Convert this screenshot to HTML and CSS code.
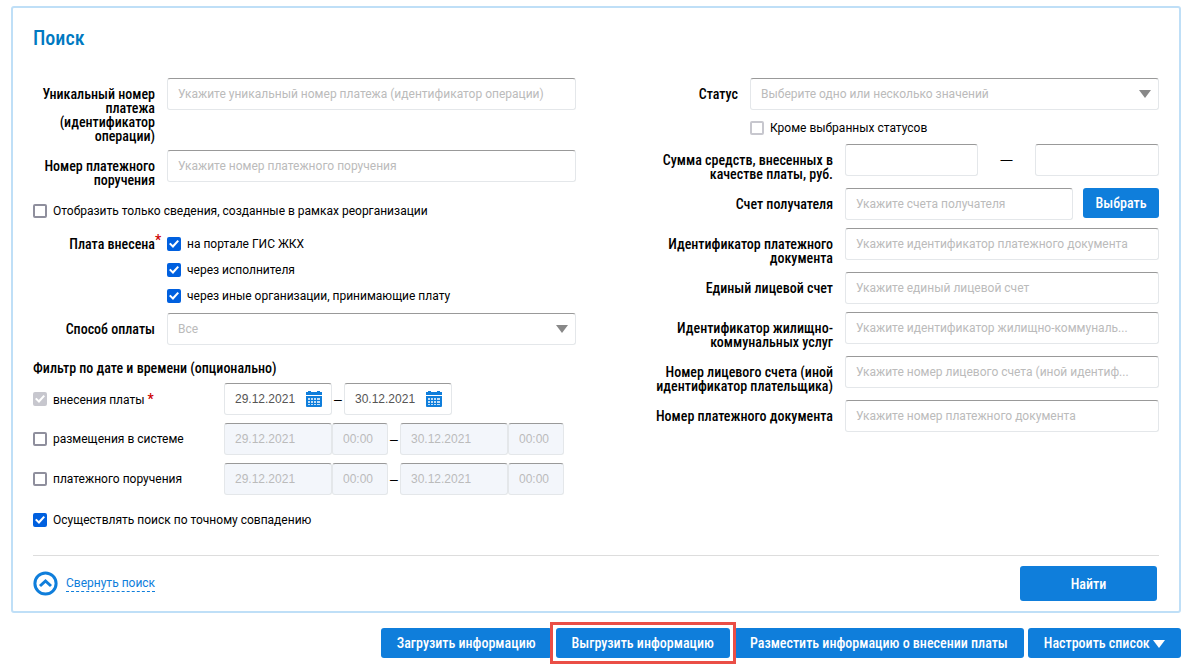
FILE: index.html
```
<!DOCTYPE html>
<html lang="ru">
<head>
    <meta charset="UTF-8">
    <meta name="viewport" content="width=device-width, initial-scale=1.0">
    <title>Поиск</title>
    <link rel="stylesheet" href="styles.css">
</head>
<body>

<form class="search-panel">
    <h1>Поиск</h1>

    <div class="columns">
        <div class="column">
            <div class="row">
                <label class="caption" for="payment-id">Уникальный номер платежа (идентификатор операции)</label>
                <div class="control">
                    <input type="text" class="field" id="payment-id" placeholder="Укажите уникальный номер платежа (идентификатор операции)">
                </div>
            </div>
            <div class="row">
                <label class="caption" for="order-number">Номер платежного поручения</label>
                <div class="control">
                    <input type="text" class="field" id="order-number" placeholder="Укажите номер платежного поручения">
                </div>
            </div>
            <div class="check-row">
                <label class="check"><input type="checkbox"> Отобразить только сведения, созданные в рамках реорганизации</label>
            </div>
            <fieldset class="row">
                <div class="caption" id="paid-via">Плата внесена<span class="required over">*</span></div>
                <div class="check-list" role="group" aria-labelledby="paid-via">
                    <label class="check"><input type="checkbox" checked> на портале ГИС ЖКХ</label>
                    <label class="check"><input type="checkbox" checked> через исполнителя</label>
                    <label class="check"><input type="checkbox" checked> через иные организации, принимающие плату</label>
                </div>
            </fieldset>
            <div class="row">
                <label class="caption" for="pay-method">Способ оплаты</label>
                <div class="control select">
                    <select class="field" id="pay-method">
                        <option>Все</option>
                    </select>
                </div>
            </div>

            <h2>Фильтр по дате и времени (опционально)</h2>
            <div class="date-row">
                <label class="check"><input type="checkbox" checked disabled> <span>внесения платы <span class="required">*</span></span></label>
                <div class="dates">
                    <div class="field date">
                        <input type="text" value="29.12.2021" aria-label="Дата с">
                        <button type="button" class="calendar" aria-label="Календарь">
                            <svg width="16" height="16" viewBox="0 0 16 16"><path fill="#0f7edb" d="M0 1h2V0h3v1h6V0h3v1h2v3H0zM0 5h16v10q0 1-1 1H1q-1 0-1-1z"/><path fill="#c3def6" d="M2 7h2v2H2zM5 7h2v2H5zM8 7h2v2H8zM11 7h3v2h-3zM2 10h2v2H2zM5 10h2v2H5zM8 10h2v2H8zM11 10h3v2h-3zM2 13h2v1H2zM5 13h2v1H5zM8 13h2v1H8zM11 13h3v1h-3z"/></svg>
                        </button>
                    </div>
                    <span class="dash">–</span>
                    <div class="field date">
                        <input type="text" value="30.12.2021" aria-label="Дата по">
                        <button type="button" class="calendar" aria-label="Календарь">
                            <svg width="16" height="16" viewBox="0 0 16 16"><path fill="#0f7edb" d="M0 1h2V0h3v1h6V0h3v1h2v3H0zM0 5h16v10q0 1-1 1H1q-1 0-1-1z"/><path fill="#c3def6" d="M2 7h2v2H2zM5 7h2v2H5zM8 7h2v2H8zM11 7h3v2h-3zM2 10h2v2H2zM5 10h2v2H5zM8 10h2v2H8zM11 10h3v2h-3zM2 13h2v1H2zM5 13h2v1H5zM8 13h2v1H8zM11 13h3v1h-3z"/></svg>
                        </button>
                    </div>
                </div>
            </div>
            <div class="date-row">
                <label class="check"><input type="checkbox"> размещения в системе</label>
                <div class="dates">
                    <input type="text" class="field date" value="29.12.2021" aria-label="Дата с" disabled>
                    <input type="text" class="field time" value="00:00" aria-label="Время с" disabled>
                    <span class="dash">–</span>
                    <input type="text" class="field date" value="30.12.2021" aria-label="Дата по" disabled>
                    <input type="text" class="field time" value="00:00" aria-label="Время по" disabled>
                </div>
            </div>
            <div class="date-row">
                <label class="check"><input type="checkbox"> платежного поручения</label>
                <div class="dates">
                    <input type="text" class="field date" value="29.12.2021" aria-label="Дата с" disabled>
                    <input type="text" class="field time" value="00:00" aria-label="Время с" disabled>
                    <span class="dash">–</span>
                    <input type="text" class="field date" value="30.12.2021" aria-label="Дата по" disabled>
                    <input type="text" class="field time" value="00:00" aria-label="Время по" disabled>
                </div>
            </div>
            <div class="check-row">
                <label class="check"><input type="checkbox" checked> Осуществлять поиск по точному совпадению</label>
            </div>
        </div>

        <div class="column">
            <div class="row">
                <label class="caption" for="status">Статус</label>
                <div class="control select">
                    <select class="field" id="status">
                        <option>Выберите одно или несколько значений</option>
                    </select>
                </div>
            </div>
            <div class="row">
                <div class="except">
                    <label class="check"><input type="checkbox" disabled> Кроме выбранных статусов</label>
                </div>
            </div>
            <div class="row wide">
                <label class="caption" for="sum-from">Сумма средств, внесенных в качестве платы, руб.</label>
                <div class="control sum">
                    <input type="text" class="field" id="sum-from">
                    <span>—</span>
                    <input type="text" class="field" aria-label="Сумма по">
                </div>
            </div>
            <div class="row wide">
                <label class="caption" for="account">Счет получателя</label>
                <div class="control account">
                    <input type="text" class="field" id="account" placeholder="Укажите счета получателя">
                    <button type="button" class="button">Выбрать</button>
                </div>
            </div>
            <div class="row wide">
                <label class="caption" for="document-id">Идентификатор платежного документа</label>
                <div class="control">
                    <input type="text" class="field" id="document-id" placeholder="Укажите идентификатор платежного документа">
                </div>
            </div>
            <div class="row wide">
                <label class="caption" for="single-account">Единый лицевой счет</label>
                <div class="control">
                    <input type="text" class="field" id="single-account" placeholder="Укажите единый лицевой счет">
                </div>
            </div>
            <div class="row wide">
                <label class="caption" for="service-id">Идентификатор жилищно-коммунальных услуг</label>
                <div class="control">
                    <input type="text" class="field" id="service-id" placeholder="Укажите идентификатор жилищно-коммуналь...">
                </div>
            </div>
            <div class="row wide">
                <label class="caption" for="payer-id">Номер лицевого счета (иной идентификатор плательщика)</label>
                <div class="control">
                    <input type="text" class="field" id="payer-id" placeholder="Укажите номер лицевого счета (иной идентиф...">
                </div>
            </div>
            <div class="row wide">
                <label class="caption" for="document-number">Номер платежного документа</label>
                <div class="control">
                    <input type="text" class="field" id="document-number" placeholder="Укажите номер платежного документа">
                </div>
            </div>
        </div>
    </div>

    <div class="panel-footer">
        <a href="#" class="collapse">
            <svg width="25" height="25" viewBox="0 0 25 25" fill="none" stroke="#0f7edb" stroke-width="3"><circle cx="12.5" cy="12.5" r="10.6"/><path d="M7 15l5.5-5 5.5 5"/></svg>
            <span>Свернуть поиск</span>
        </a>
        <button type="submit" class="button find">Найти</button>
    </div>
</form>

<div class="actions">
    <button type="button" class="button">Загрузить информацию</button>
    <div class="highlight"><button type="button" class="button">Выгрузить информацию</button></div>
    <button type="button" class="button">Разместить информацию о внесении платы</button>
    <button type="button" class="button">Настроить список <span class="arrow"></span></button>
</div>

</body>
</html>
```
FILE: styles.css
```
* {
    box-sizing: border-box;
}
body {
    min-height: 100vh;
    margin: 0;
    padding: 6px 16px 6px 11px;
    background-color: #fff;
    color: #000;
    font-family: Roboto, Arial, sans-serif;
    font-size: 12px;
    line-height: 16px;
}
h1, h2, .caption, .button {
    font-family: "Roboto Condensed", Roboto, sans-serif;
    font-weight: 500;
}
h1 {
    margin: 0 0 28px;
    color: #0079c1;
    font-size: 20px;
    line-height: 24px;
}
h2 {
    margin: 7px 0;
    font-size: 14px;
    line-height: 16px;
}
fieldset {
    margin: 0;
    padding: 0;
    border: none;
}
input, select, button {
    font-family: inherit;
    font-size: inherit;
}
.search-panel {
    padding: 18px 20px 10px;
    border: 2px solid #bfdff7;
    border-radius: 3px;
}
.columns {
    display: grid;
    grid-template-columns: 1fr 1fr;
    gap: 40px;
}
.row {
    display: grid;
    grid-template-columns: 122px 1fr;
    column-gap: 12px;
    align-items: start;
}
.row.wide {
    grid-template-columns: 217px 1fr;
}
.caption {
    position: relative;
    padding: 9px 0 7px;
    font-size: 14px;
    line-height: 14px;
    text-align: right;
}
.control {
    position: relative;
    padding-bottom: 8px;
}
.field {
    display: block;
    width: 100%;
    height: 32px;
    padding: 0 10px;
    border: 1px solid #e4e7ea;
    border-top-color: #999;
    border-radius: 3px;
    background-color: #fff;
    color: #555;
}
.field::placeholder {
    color: #bbb;
}
.field:disabled {
    background-color: #f3f6fb;
    color: #bbb;
}
select.field {
    appearance: none;
    color: #bbb;
}
.select::after {
    content: "";
    position: absolute;
    top: 12px;
    right: 8px;
    border: 6px solid transparent;
    border-top: 8px solid #888;
    border-bottom: none;
    pointer-events: none;
}
.check {
    display: flex;
    align-items: center;
    gap: 6px;
}
.check input {
    appearance: none;
    flex: none;
    display: grid;
    place-items: center;
    width: 14px;
    height: 14px;
    margin: 0;
    border: 2px solid #8f8f9d;
    border-radius: 2px;
    background-color: #fff;
}
.check input:checked {
    border-color: #0060df;
    background-color: #0060df;
}
.check input:disabled {
    border-color: #c7c7ce;
}
.check input:checked:disabled {
    background-color: #c7c7ce;
}
.check input:checked::before {
    content: "";
    width: 10px;
    height: 8px;
    background-color: #fff;
    clip-path: polygon(0 50%, 15% 35%, 38% 62%, 85% 0, 100% 15%, 40% 100%);
}
.check-row {
    padding: 9px 0;
}
.check-list {
    display: grid;
    gap: 10px;
    padding: 8px 0 9px;
}
.required {
    color: #c00;
    font-family: Roboto, Arial, sans-serif;
    font-size: 14px;
    font-weight: 500;
}
.over {
    position: absolute;
    top: 5px;
    left: 100%;
}
.except {
    grid-column: 2;
    padding: 2px 0 8px;
}
.sum, .account {
    display: grid;
    grid-template-columns: 133px 1fr 124px;
    align-items: center;
    text-align: center;
}
.sum span {
    font-family: "Liberation Sans", Arial, sans-serif;
}
.account {
    grid-template-columns: 1fr 76px;
    gap: 10px;
    align-items: start;
}
.date-row {
    display: grid;
    grid-template-columns: 191px 1fr;
    align-items: center;
    padding-bottom: 8px;
}
.dates {
    display: flex;
    align-items: center;
    font-family: "Liberation Sans", Arial, sans-serif;
}
.date {
    width: 108px;
}
.time {
    width: 56px;
}
.dash {
    width: 12px;
    font-size: 14px;
    text-align: center;
}
div.date {
    display: flex;
    align-items: center;
    justify-content: space-between;
    padding-right: 9px;
}
.date input {
    width: 66px;
    padding: 0;
    border: none;
    color: #555;
}
.calendar {
    padding: 0;
    border: none;
    background: none;
    line-height: 0;
    cursor: pointer;
}
.panel-footer {
    display: flex;
    align-items: center;
    justify-content: space-between;
    margin-top: 18px;
    padding: 10px 2px 0 0;
    border-top: 1px solid #ddd;
}
.collapse {
    display: flex;
    align-items: center;
    gap: 8px;
    color: #0f7edb;
    text-decoration: none;
}
.collapse span {
    border-bottom: 1px dashed #0f7edb;
}
.button {
    height: 30px;
    padding: 0 16px;
    border: none;
    border-radius: 3px;
    background-color: #0f7edb;
    color: #fff;
    font-size: 14px;
    cursor: pointer;
}
.button:hover {
    background-color: #0b6cc0;
}
.account .button {
    padding: 0;
}
.find {
    width: 137px;
    height: 35px;
}
.actions {
    display: flex;
    justify-content: flex-end;
    gap: 4px;
    margin-top: 15px;
}
.highlight {
    z-index: 1;
    background-color: #fff;
    box-shadow: 0 0 0 3px #fff, 0 0 0 6px #ea4e46;
}
.highlight .button {
    display: block;
}
.arrow {
    display: inline-block;
    border: 6px solid transparent;
    border-top: 8px solid #fff;
    border-bottom: none;
}
```
